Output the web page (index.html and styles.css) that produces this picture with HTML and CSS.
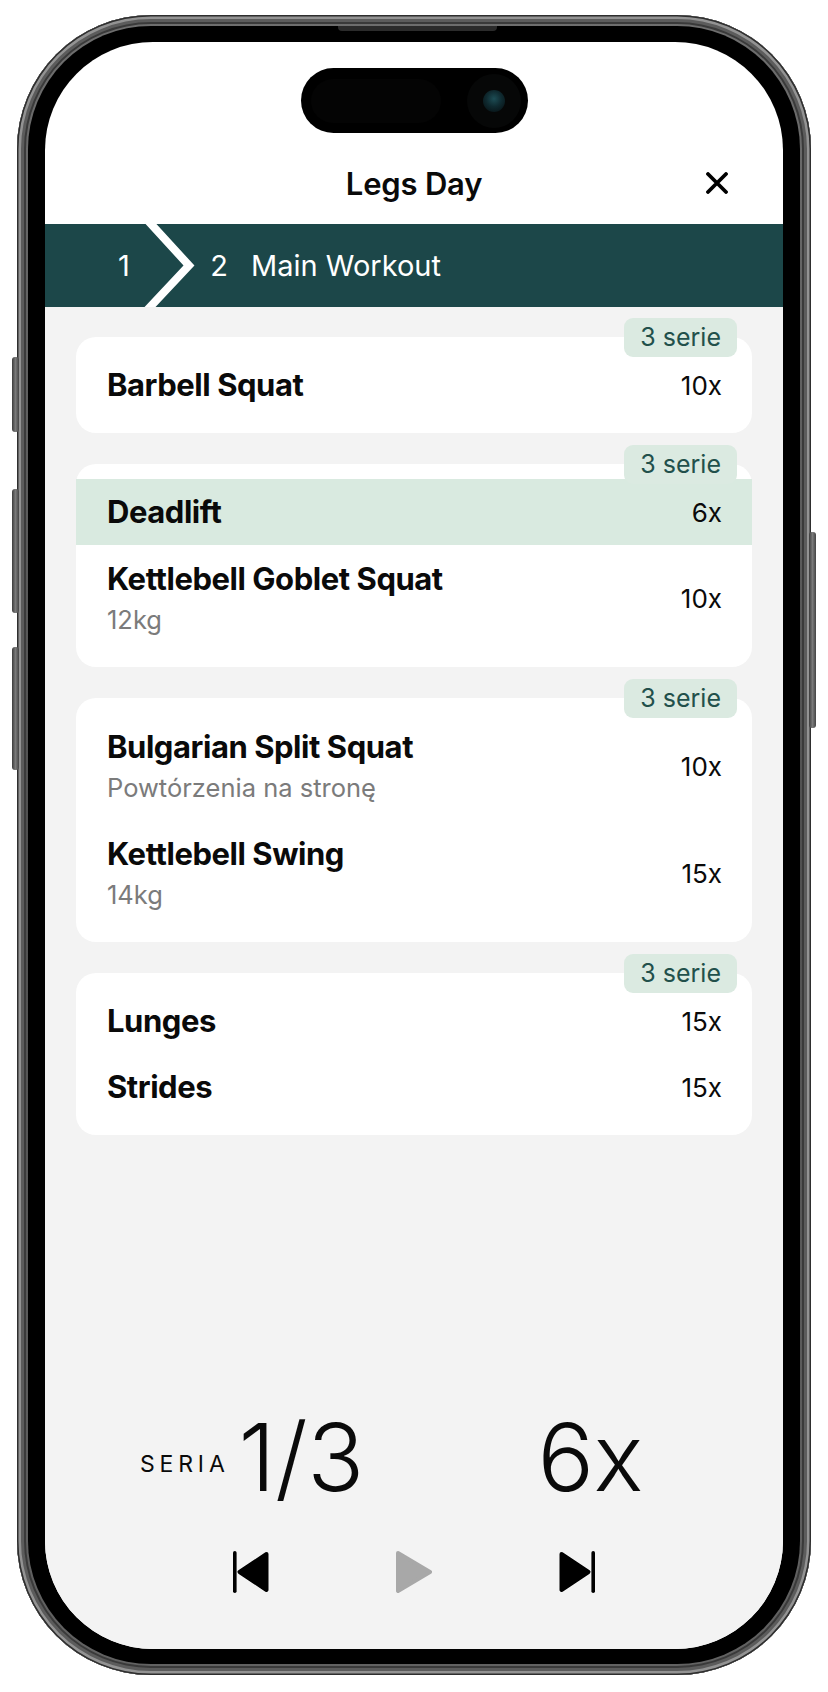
FILE: index.html
```html
<!DOCTYPE html>
<html lang="pl">
<head>
<meta charset="utf-8">
<title>Legs Day</title>
<link rel="stylesheet" href="styles.css">
</head>
<body>
<div class="phone">
  <span class="side-btn btn-action"></span>
  <span class="side-btn btn-vol-up"></span>
  <span class="side-btn btn-vol-down"></span>
  <span class="side-btn btn-power"></span>
  <span class="speaker"></span>
  <div class="bezel">
    <div class="screen">
      <div class="island">
        <span class="island-pill"></span>
        <span class="camera"><span class="lens"></span></span>
      </div>
      <header class="topbar">
        <span class="spacer"></span>
        <h1 class="title">Legs Day</h1>
        <button class="close" aria-label="Zamknij">
          <svg viewBox="0 0 22 22" width="22" height="22"><path d="M2 2 L20 20 M20 2 L2 20" stroke="#000" stroke-width="3.8" stroke-linecap="round" fill="none"/></svg>
        </button>
      </header>
      <nav class="crumbs">
        <span class="crumb-num first">1</span>
        <svg class="crumb-sep" viewBox="0 0 60 83" width="60" height="83"><polyline points="2.95,-4.42 45,41.5 1.9,87.4" fill="none" stroke="#fff" stroke-width="8" stroke-linejoin="miter"/></svg>
        <span class="crumb-num">2</span>
        <span class="crumb-label">Main Workout</span>
      </nav>
      <main class="content">
        <section class="group">
          <span class="badge">3 serie</span>
          <div class="row">
            <div class="info"><div class="name">Barbell Squat</div></div>
            <div class="reps">10x</div>
          </div>
        </section>
        <section class="group">
          <span class="badge">3 serie</span>
          <div class="row active">
            <div class="info"><div class="name">Deadlift</div></div>
            <div class="reps">6x</div>
          </div>
          <div class="row tall">
            <div class="info"><div class="name">Kettlebell Goblet Squat</div><div class="sub">12kg</div></div>
            <div class="reps">10x</div>
          </div>
        </section>
        <section class="group">
          <span class="badge">3 serie</span>
          <div class="row tall">
            <div class="info"><div class="name">Bulgarian Split Squat</div><div class="sub">Powtórzenia na stronę</div></div>
            <div class="reps">10x</div>
          </div>
          <div class="row tall">
            <div class="info"><div class="name">Kettlebell Swing</div><div class="sub">14kg</div></div>
            <div class="reps">15x</div>
          </div>
        </section>
        <section class="group">
          <span class="badge">3 serie</span>
          <div class="row">
            <div class="info"><div class="name">Lunges</div></div>
            <div class="reps">15x</div>
          </div>
          <div class="row">
            <div class="info"><div class="name">Strides</div></div>
            <div class="reps">15x</div>
          </div>
        </section>
        <footer class="player">
          <div class="stats">
            <span class="seria">SERIA</span>
            <span class="big count">1/3</span>
            <span class="big target">6x</span>
          </div>
          <div class="controls">
            <button class="ctl" aria-label="Poprzednie">
              <svg viewBox="0 0 36 42" width="36" height="42"><rect x="0" y="0" width="3.6" height="42" rx="1.8" fill="#000"/><path d="M33.5 3 L6.5 21 L33.5 39 Z" fill="#000" stroke="#000" stroke-width="4" stroke-linejoin="round"/></svg>
            </button>
            <button class="ctl" aria-label="Start">
              <svg viewBox="0 0 36 42" width="36" height="42"><path d="M2 2 L34 21 L2 40 Z" fill="#a8a8a8" stroke="#a8a8a8" stroke-width="4" stroke-linejoin="round"/></svg>
            </button>
            <button class="ctl" aria-label="Następne">
              <svg viewBox="0 0 36 42" width="36" height="42"><rect x="32.4" y="0" width="3.6" height="42" rx="1.8" fill="#000"/><path d="M2.5 3 L29.5 21 L2.5 39 Z" fill="#000" stroke="#000" stroke-width="4" stroke-linejoin="round"/></svg>
            </button>
          </div>
        </footer>
      </main>
    </div>
  </div>
</div>
</body>
</html>
```

FILE: styles.css
```css
* { box-sizing: border-box; margin: 0; padding: 0; }

html, body { background: #ffffff; }

body {
  font-family: Inter, "Noto Sans", "Liberation Sans", sans-serif;
  color: #0a0a0a;
}

button { background: none; border: 0; font: inherit; color: inherit; display: block; }

.phone {
  position: relative;
  width: 794px;
  height: 1660px;
  margin: 15px 0 0 17px;
  padding: 11px;
  border-radius: 134px;
  background: linear-gradient(180deg, #6e6e6e 0%, #505050 50%, #626262 100%);
  box-shadow:
    inset 0 0 0 1.5px #2e2e2e,
    inset 0 0 0 4px #939393,
    inset 0 0 0 7px #5c5c5c,
    inset 0 0 0 9px #3a3a3a;
}

.side-btn {
  position: absolute;
  width: 7px;
  border-radius: 3px;
  background: linear-gradient(90deg, #3c3c3c, #7a7a7a 50%, #444);
}
.btn-action { left: -5px; top: 342px; height: 75px; }
.btn-vol-up { left: -5px; top: 474px; height: 124px; }
.btn-vol-down { left: -5px; top: 632px; height: 123px; }
.btn-power { right: -5px; top: 517px; height: 196px; }

.speaker {
  position: absolute;
  left: 321px;
  top: 11px;
  width: 159px;
  height: 5px;
  border-radius: 0 0 4px 4px;
  background: #2b2b2b;
}

.bezel {
  height: 100%;
  border-radius: 123px;
  background: #000000;
  padding: 16px 17px 15px;
}

.screen {
  height: 100%;
  border-radius: 108px;
  background: #ffffff;
  overflow: hidden;
  display: flex;
  flex-direction: column;
}

.island {
  align-self: center;
  margin-top: 26px;
  width: 227px;
  height: 65px;
  border-radius: 33px;
  background: #000;
  display: flex;
  align-items: center;
  justify-content: space-between;
  padding: 0 7px 0 10px;
  flex: none;
}
.island-pill {
  width: 130px;
  height: 44px;
  border-radius: 22px;
  background: #040404;
}
.camera {
  width: 54px;
  height: 54px;
  border-radius: 50%;
  background: #060707;
  display: flex;
  align-items: center;
  justify-content: center;
}
.lens {
  width: 22px;
  height: 22px;
  border-radius: 50%;
  background: radial-gradient(circle at 50% 40%, #1d4d55 0%, #0f2a30 45%, #050b0d 100%);
}

.topbar {
  height: 91px;
  flex: none;
  display: grid;
  grid-template-columns: 1fr auto 1fr;
  align-items: center;
  padding-top: 9px;
}
.title {
  font-size: 31px;
  font-weight: 600;
  letter-spacing: -0.2px;
  color: #0a0a0a;
}
.close {
  justify-self: end;
  margin-right: 55px;
  width: 22px;
  height: 22px;
}
.close svg { display: block; }

.crumbs {
  height: 83px;
  flex: none;
  background: #1c4749;
  color: #ffffff;
  display: flex;
  align-items: center;
  font-size: 29px;
  overflow: hidden;
}
.crumb-num { width: 30px; text-align: center; }
.crumb-num.first { width: 40px; margin-left: 59px; }
.crumb-sep { display: block; flex: none; overflow: visible; }
.crumb-label { margin-left: 17px; }

.content {
  flex: 1;
  background: #f3f3f3;
  padding: 30px 31px 56px;
  display: flex;
  flex-direction: column;
  gap: 31px;
}

.group {
  position: relative;
  background: #ffffff;
  border-radius: 20px;
  padding: 15px 0;
}

.badge {
  position: absolute;
  top: -19px;
  right: 15px;
  z-index: 1;
  height: 39px;
  padding: 0 16px;
  border-radius: 9px;
  background: #dbeae1;
  color: #22504b;
  font-size: 25px;
  line-height: 39px;
}

.row {
  display: flex;
  align-items: center;
  justify-content: space-between;
  min-height: 66px;
  padding: 0 30px 0 31px;
}
.row.tall { padding-top: 14px; padding-bottom: 15px; }
.row.active { background: #d9eae0; }

.name {
  font-size: 31px;
  font-weight: 700;
  line-height: 40px;
  letter-spacing: -0.45px;
  color: #0a0a0a;
}
.sub {
  font-size: 25.5px;
  line-height: 34px;
  margin-top: 4px;
  color: #7b7b7b;
}
.reps {
  font-size: 26px;
  color: #0a0a0a;
}

.player { margin-top: auto; }

.stats {
  display: flex;
  align-items: flex-end;
  padding-left: 64px;
}
.seria {
  font-size: 23px;
  line-height: 1;
  letter-spacing: 0.21em;
  margin-bottom: 28px;
}
.big {
  font-size: 94px;
  font-weight: 300;
  line-height: 1;
  letter-spacing: -0.5px;
}
.count { margin-left: 9px; }
.target { margin-left: auto; margin-right: 109px; }

.controls {
  display: flex;
  justify-content: center;
  gap: 127px;
  margin-top: 47px;
  padding-left: 0;
}
.ctl { width: 36px; height: 42px; }
.ctl svg { display: block; }
```
